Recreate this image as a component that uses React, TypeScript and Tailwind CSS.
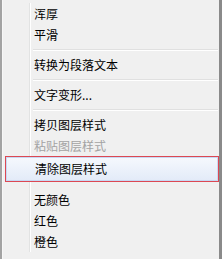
import React from "react";

type Item =
  | { kind: "item"; label: string; disabled?: boolean; active?: boolean }
  | { kind: "sep" };

const items: Item[] = [
  { kind: "item", label: "浑厚" },
  { kind: "item", label: "平滑" },
  { kind: "sep" },
  { kind: "item", label: "转换为段落文本" },
  { kind: "sep" },
  { kind: "item", label: "文字变形..." },
  { kind: "sep" },
  { kind: "item", label: "拷贝图层样式" },
  { kind: "item", label: "粘贴图层样式", disabled: true },
  { kind: "item", label: "清除图层样式", active: true },
  { kind: "sep" },
  { kind: "item", label: "无颜色" },
  { kind: "item", label: "红色" },
  { kind: "item", label: "橙色" },
];

function Gutter() {
  return <div className="w-[27px] shrink-0 h-full border-r border-[#e2e3e3] shadow-[1px_0_0_#ffffff]" />;
}

export default function App() {
  return (
    <div
      className="w-[222px] h-[259px] overflow-hidden bg-[#f0f0f0] border-l-2 border-r-[3px] border-l-[#a3a3a3] border-r-[#8a8a8a] text-[12px] text-black"
      style={{ fontFamily: '"Noto Sans CJK SC", "Noto Sans", sans-serif' }}
    >
      <div className="h-full border-l border-[#f7f7f7] flex flex-col pt-[3px]">
        {items.map((it, i) => {
          if (it.kind === "sep") {
            const hidden = i === 10;
            return (
              <div key={i} className={hidden ? "flex h-[7px]" : "flex h-[9px]"}>
                <Gutter />
                {!hidden && (
                  <div className="flex-1 flex flex-col justify-center pl-[3px] pr-[1px]">
                    <div className="h-px bg-[#e0e0e0]" />
                    <div className="h-px bg-white" />
                  </div>
                )}
              </div>
            );
          }
          if (it.active) {
            return (
              <div key={i} className="h-[26px] ml-[2px] border border-[#dc4853]">
                <div className="h-full border border-[#c7d9f3] bg-gradient-to-b from-[#f5f8fd] to-[#e3ebf8] flex items-center pl-[28px] leading-none">
                  {it.label}
                </div>
              </div>
            );
          }
          return (
            <div key={i} className="flex h-[21px]">
              <Gutter />
              <div
                className={
                  "flex items-center pl-[4px] leading-none " +
                  (it.disabled ? "text-[#a3a3a3]" : "text-black")
                }
              >
                {it.label}
              </div>
            </div>
          );
        })}
      </div>
    </div>
  );
}
